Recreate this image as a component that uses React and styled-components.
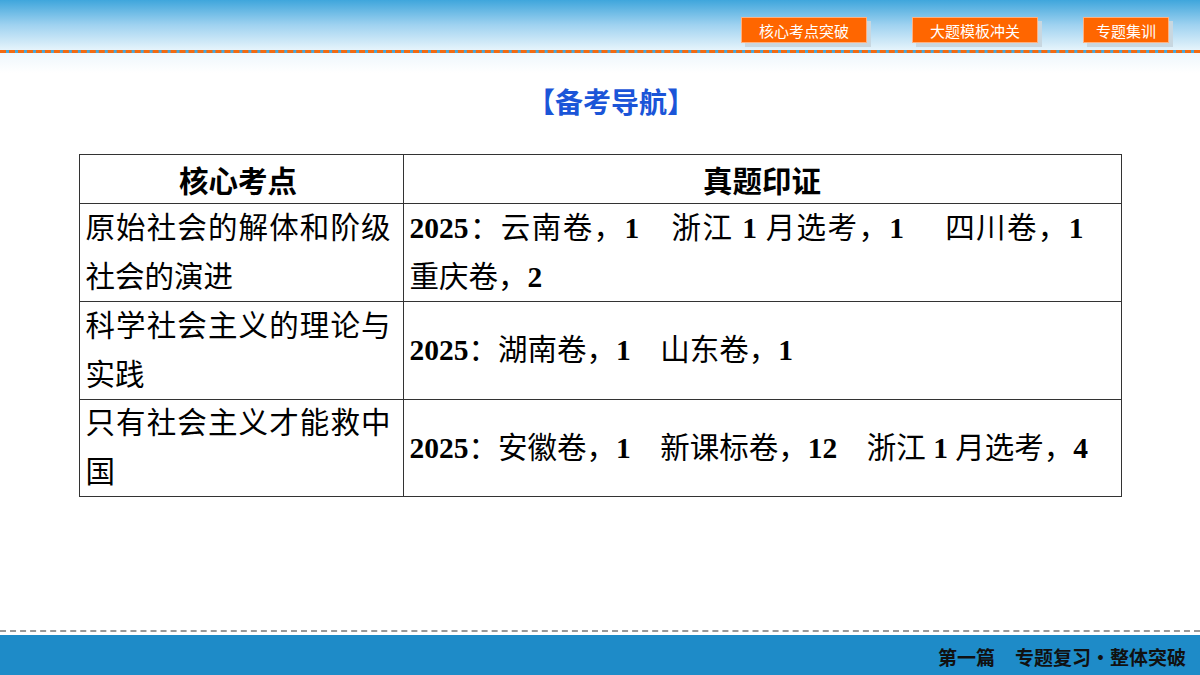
import React from "react";
import styled, { createGlobalStyle } from "styled-components";

const G = createGlobalStyle`
  html,body{margin:0;padding:0;width:1200px;height:675px;overflow:hidden;background:#fff;}
`;
const Page = styled.div`width:1200px;height:675px;display:flex;flex-direction:column;font-family:"Liberation Serif","Noto Sans CJK SC",serif;`;
const Header = styled.div`
  height:53px;flex:none;background:linear-gradient(#3fa6dc,#9fd2f0 50%,#e6f4fb);
  display:flex;justify-content:flex-end;align-items:flex-start;padding:17px 31px 0 0;box-sizing:border-box;gap:45px;
  border-bottom:3px dashed #f26a10;
`;
const Tab = styled.div`
  height:26px;padding:0 ${p=>p.$pad}px;background:#ff6600;color:#fff;font:15px "Noto Sans CJK SC",sans-serif;
  display:flex;align-items:center;box-shadow:4px 4px 0 #c8d7e0;border:1px solid #ffb080;box-sizing:border-box;
`;
const Body = styled.div`flex:1;background:linear-gradient(#eef7fc,#fff 20px);display:flex;flex-direction:column;align-items:center;`;
const Title = styled.div`margin-top:28px;color:#1b55d8;font:bold 28px "Noto Sans CJK SC",sans-serif;margin-left:22px;`;
const Table = styled.div`
  margin-top:33px;width:1043px;display:grid;grid-template-columns:324px 1fr;border:1px solid #333;box-sizing:border-box;margin-left:0px;
`;
const Cell = styled.div`
  border-right:${p=>p.$l?"1px solid #333":"none"};border-top:${p=>p.$top?"none":"1px solid #333"};
  height:${p=>p.$h}px;box-sizing:border-box;display:flex;align-items:center;
  justify-content:${p=>p.$c?"center":"flex-start"};padding:0 ${p=>p.$l?12:6}px 0 6px;font-size:29.5px;line-height:49px;color:#000;
  text-align:${p=>p.$c?"center":"justify"};
  font-weight:${p=>p.$b?"bold":"normal"};font-family:${p=>p.$b?'"Noto Sans CJK SC",sans-serif':'"Liberation Serif","Noto Sans CJK SC",serif'};
`;
const B = styled.b`font-family:"Liberation Serif",serif;`;
const Footer = styled.div`
  flex:none;border-top:2px dashed #999;padding-top:3px;background:#fff;
`;
const Bar = styled.div`height:40px;background:#1e8bc8;display:flex;justify-content:flex-end;align-items:center;padding:0 14px 0 0;
  font:bold 19px "Noto Sans CJK SC",sans-serif;color:#111;gap:20px;padding-top:2px;box-sizing:border-box;`;

export default function App(){
  return <Page><G/>
    <Header><Tab $pad={17}>核心考点突破</Tab><Tab $pad={17}>大题模板冲关</Tab><Tab $pad={12}>专题集训</Tab></Header>
    <Body>
      <Title>【备考导航】</Title>
      <Table>
        <Cell $l $top $c $b $h={48}>核心考点</Cell>
        <Cell $top $c $b $h={48}>真题印证</Cell>
        <Cell $l $h={98}>原始社会的解体和阶级社会的演进</Cell>
        <Cell $h={98}><span><B>2025</B>：云南卷，<B>1</B>　浙江 <B>1</B> 月选考，<B>1</B>　 四川卷，<B>1</B>　 重庆卷，<B>2</B></span></Cell>
        <Cell $l $h={98}>科学社会主义的理论与实践</Cell>
        <Cell $h={98}><span><B>2025</B>：湖南卷，<B>1</B>　山东卷，<B>1</B></span></Cell>
        <Cell $l $h={97}>只有社会主义才能救中国</Cell>
        <Cell $h={97}><span><B>2025</B>：安徽卷，<B>1</B>　新课标卷，<B>12</B>　浙江 <B>1</B> 月选考，<B>4</B></span></Cell>
      </Table>
    </Body>
    <Footer><Bar><span>第一篇</span><span>专题复习·整体突破</span></Bar></Footer>
  </Page>;
}
